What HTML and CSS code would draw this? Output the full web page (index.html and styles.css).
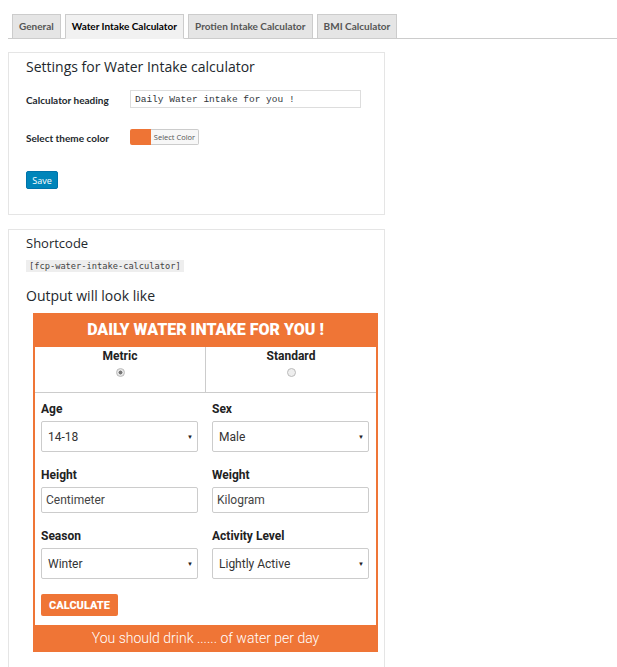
FILE: index.html
```html
<!DOCTYPE html>
<html lang="en">
<head>
    <meta charset="UTF-8">
    <meta name="viewport" content="width=device-width, initial-scale=1.0">
    <title>Water Intake Calculator Settings</title>
    <link rel="stylesheet" href="styles.css">
</head>
<body>
    <div class="wrap">
        <!-- Pestañas -->
        <nav class="tabs">
            <a class="tab">General</a>
            <a class="tab active">Water Intake Calculator</a>
            <a class="tab">Protien Intake Calculator</a>
            <a class="tab">BMI Calculator</a>
        </nav>

        <!-- Ajustes -->
        <div class="card settings">
            <h2>Settings for Water Intake calculator</h2>
            <div class="field-row">
                <label class="field-label">Calculator heading</label>
                <input class="text-input" type="text" value="Daily Water intake for you !">
            </div>
            <div class="field-row color-row">
                <label class="field-label">Select theme color</label>
                <div class="color-picker">
                    <span class="swatch"></span>
                    <span class="pick-btn">Select Color</span>
                </div>
            </div>
            <button class="save-btn">Save</button>
        </div>

        <!-- Vista previa -->
        <div class="card preview">
            <h3>Shortcode</h3>
            <code class="shortcode">[fcp-water-intake-calculator]</code>
            <h2 class="output-title">Output will look like</h2>

            <div class="calc">
                <div class="calc-head">Daily Water intake for you !</div>
                <div class="calc-body">
                    <div class="units">
                        <div class="unit">
                            <span>Metric</span>
                            <span class="radio checked"></span>
                        </div>
                        <div class="unit">
                            <span>Standard</span>
                            <span class="radio"></span>
                        </div>
                    </div>
                    <div class="calc-fields">
                        <div class="calc-field">
                            <label>Age</label>
                            <div class="select"><span>14-18</span><span class="arrow">▼</span></div>
                        </div>
                        <div class="calc-field">
                            <label>Sex</label>
                            <div class="select"><span>Male</span><span class="arrow">▼</span></div>
                        </div>
                        <div class="calc-field">
                            <label>Height</label>
                            <div class="input">Centimeter</div>
                        </div>
                        <div class="calc-field">
                            <label>Weight</label>
                            <div class="input">Kilogram</div>
                        </div>
                        <div class="calc-field">
                            <label>Season</label>
                            <div class="select"><span>Winter</span><span class="arrow">▼</span></div>
                        </div>
                        <div class="calc-field">
                            <label>Activity Level</label>
                            <div class="select"><span>Lightly Active</span><span class="arrow">▼</span></div>
                        </div>
                    </div>
                    <button class="calc-btn">Calculate</button>
                </div>
                <div class="calc-foot">You should drink ...... of water per day</div>
            </div>
        </div>
    </div>
</body>
</html>
```

FILE: styles.css
```css
body {
    margin: 0;
    background-color: #fff;
    font-family: "Open Sans", sans-serif;
    color: #23282d;
}
.wrap {
    padding-left: 8px;
}
.tabs {
    display: flex;
    margin-top: 14px;
    padding-left: 4px;
    border-bottom: 1px solid #ccc;
    height: 24px;
}
.tab {
    box-sizing: border-box;
    height: 25px;
    line-height: 23px;
    padding: 0 6px;
    margin-right: 4px;
    background-color: #e5e5e5;
    border: 1px solid #ccc;
    font-family: "Lato", sans-serif;
    font-size: 10px;
    font-weight: bold;
    color: #555;
}
.tab.active {
    background-color: #f1f1f1;
    border-bottom-color: #f1f1f1;
    color: #000;
}
.card {
    box-sizing: border-box;
    width: 377px;
    margin-top: 13px;
    border: 1px solid #e5e5e5;
    padding: 0 17px;
    background-color: #fff;
}
.settings {
    height: 163px;
}
.settings h2 {
    margin: 4px 0 0;
    font-size: 14px;
    line-height: 20px;
    font-weight: normal;
}
.field-row {
    display: flex;
    align-items: center;
    margin-top: 13px;
    height: 18px;
}
.color-row {
    margin-top: 21px;
    height: 16px;
}
.field-label {
    width: 104px;
    font-family: "Lato", sans-serif;
    font-size: 10px;
    font-weight: bold;
    padding-top: 2px;
}
.text-input {
    box-sizing: border-box;
    width: 231px;
    height: 18px;
    padding: 0 4px;
    border: 1px solid #ddd;
    font-family: "Liberation Mono", monospace;
    font-size: 9.5px;
    color: #32373c;
}
.color-picker {
    display: flex;
    height: 16px;
}
.swatch {
    width: 21px;
    background-color: #ee7435;
    border-radius: 2px 0 0 2px;
}
.pick-btn {
    box-sizing: border-box;
    width: 48px;
    border: 1px solid #ccc;
    border-left: none;
    border-radius: 0 2px 2px 0;
    background-color: #f7f7f7;
    font-size: 7.5px;
    line-height: 14px;
    text-align: center;
    color: #555;
}
.save-btn {
    display: block;
    margin-top: 26px;
    width: 32px;
    height: 18px;
    padding: 0;
    background-color: #0085ba;
    border: 1px solid #0073aa;
    border-radius: 2px;
    color: #fff;
    font-family: "Open Sans", sans-serif;
    font-size: 9px;
}
.preview {
    margin-top: 14px;
    height: 460px;
}
.preview h3 {
    margin: 4px 0 0;
    font-size: 13px;
    line-height: 18px;
    font-weight: normal;
}
.shortcode {
    display: inline-block;
    margin-top: 1px;
    padding: 0 3px;
    background-color: #eee;
    font-family: "DejaVu Sans Mono", monospace;
    font-size: 8.7px;
    line-height: 12px;
    color: #444;
}
.output-title {
    margin: 12px 0 0;
    font-size: 14px;
    line-height: 20px;
    font-weight: normal;
}
.calc {
    width: 345px;
    margin: 7px 0 0 7px;
    font-family: "Roboto", sans-serif;
}
.calc-head {
    height: 34px;
    line-height: 34px;
    background-color: #ef7536;
    color: #fff;
    text-align: center;
    text-transform: uppercase;
    font-size: 16px;
    font-weight: 900;
}
.calc-body {
    border-left: 2px solid #ef7536;
    border-right: 2px solid #ef7536;
    padding-bottom: 9px;
}
.units {
    display: flex;
    height: 45px;
    border-bottom: 1px solid #ccc;
}
.unit {
    flex: 1;
    display: flex;
    flex-direction: column;
    align-items: center;
    padding-top: 2px;
    font-size: 12px;
    font-weight: bold;
    color: #222;
}
.unit + .unit {
    border-left: 1px solid #ccc;
}
.radio {
    box-sizing: border-box;
    width: 9px;
    height: 9px;
    margin-top: 5px;
    border: 1px solid #bbb;
    border-radius: 50%;
    background-color: #eee;
}
.radio.checked {
    background: radial-gradient(circle, #777 35%, #e5e5e5 45%);
}
.calc-fields {
    display: grid;
    grid-template-columns: 157px 157px;
    column-gap: 14px;
    row-gap: 15px;
    padding: 8px 7px 0 6px;
}
.calc-field label {
    display: block;
    font-size: 12px;
    line-height: 16px;
    font-weight: bold;
    color: #222;
    margin-bottom: 4px;
}
.select, .input {
    box-sizing: border-box;
    display: flex;
    align-items: center;
    justify-content: space-between;
    height: 31px;
    padding: 0 4px 0 6px;
    border: 1px solid #ccc;
    border-radius: 2px;
    font-size: 12px;
    color: #333;
}
.input {
    height: 26px;
    margin-top: 1px;
    padding: 0 4px;
    color: #444;
}
.arrow {
    font-size: 6px;
    color: #222;
}
.calc-btn {
    display: block;
    margin: 15px 0 0 6px;
    height: 22px;
    width: 77px;
    padding: 0;
    background-color: #ef7536;
    border: none;
    border-radius: 2px;
    color: #fff;
    text-transform: uppercase;
    font-family: "Roboto", sans-serif;
    font-size: 11px;
    font-weight: 900;
}
.calc-foot {
    height: 27px;
    line-height: 27px;
    background-color: #ef7536;
    color: #fff;
    text-align: center;
    font-size: 14px;
    font-weight: 300;
}
```
